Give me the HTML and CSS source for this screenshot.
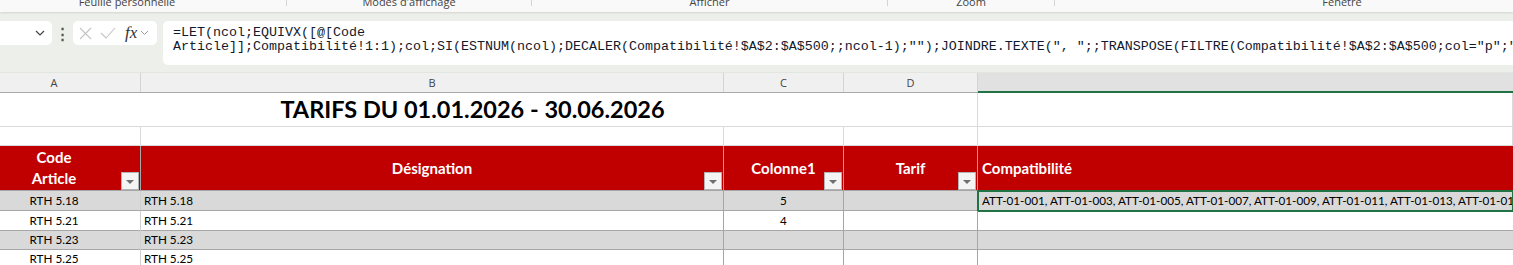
FILE: index.html
```html
<!DOCTYPE html>
<html lang="fr">
<head>
  <meta charset="utf-8">
  <title>Tarifs</title>
  <link rel="stylesheet" href="styles.css">
</head>
<body>
  <div class="ribbon">
    <div class="rgroup g1"><span>Feuille personnelle</span></div>
    <div class="rgroup g2"><span>Modes d'affichage</span></div>
    <div class="rgroup g3"><span>Afficher</span></div>
    <div class="rgroup g4"><span>Zoom</span></div>
    <div class="rgroup g5"><span>Fenêtre</span></div>
  </div>

  <div class="fbar">
    <div class="namebox">
      <svg width="10" height="6" viewBox="0 0 10 6"><path d="M1 1l4 4 4-4" fill="none" stroke="#444" stroke-width="1.2"/></svg>
    </div>
    <div class="dots">&#8942;</div>
    <div class="fxbox">
      <svg class="ico-x" width="13" height="13" viewBox="0 0 13 13"><path d="M1 1l11 11M12 1L1 12" stroke="#c4c4c4" stroke-width="1.1"/></svg>
      <svg class="ico-ok" width="16" height="12" viewBox="0 0 16 12"><path d="M1 6l5 5L15 1" fill="none" stroke="#c4c4c4" stroke-width="1.1"/></svg>
      <span class="fx">fx</span>
      <svg class="ico-down" width="9" height="6" viewBox="0 0 9 6"><path d="M1 1l3.5 3.5L8 1" fill="none" stroke="#999" stroke-width="1"/></svg>
    </div>
    <div class="formula">=LET(ncol;EQUIVX([@[Code
Article]];Compatibilité!1:1);col;SI(ESTNUM(ncol);DECALER(Compatibilité!$A$2:$A$500;;ncol-1);"");JOINDRE.TEXTE(", ";;TRANSPOSE(FILTRE(Compatibilité!$A$2:$A$500;col="p";"")))))</div>
  </div>

  <div class="sheet">
    <div class="row colhead">
      <div>A</div><div>B</div><div>C</div><div>D</div><div class="cur"></div>
    </div>

    <div class="row r-title">
      <div class="title">TARIFS DU 01.01.2026 - 30.06.2026</div>
      <div class="grid"></div>
    </div>

    <div class="row r-blank">
      <div class="grid"></div><div class="grid"></div><div class="grid"></div><div class="grid"></div><div class="grid"></div>
    </div>

    <div class="row r-head">
      <div class="th center">Code<br>Article<span class="filter"></span></div>
      <div class="th center">Désignation<span class="filter"></span></div>
      <div class="th center">Colonne1<span class="filter"></span></div>
      <div class="th center">Tarif<span class="filter"></span></div>
      <div class="th left">Compatibilité</div>
    </div>

    <div class="row data band">
      <div class="td center">RTH 5.18</div>
      <div class="td">RTH 5.18</div>
      <div class="td center">5</div>
      <div class="td"></div>
      <div class="td compat sel">ATT-01-001, ATT-01-003, ATT-01-005, ATT-01-007, ATT-01-009, ATT-01-011, ATT-01-013, ATT-01-015, ATT-01-017</div>
    </div>
    <div class="row data short">
      <div class="td center">RTH 5.21</div>
      <div class="td">RTH 5.21</div>
      <div class="td center">4</div>
      <div class="td"></div>
      <div class="td compat"></div>
    </div>
    <div class="row data band short">
      <div class="td center">RTH 5.23</div>
      <div class="td">RTH 5.23</div>
      <div class="td center"></div>
      <div class="td"></div>
      <div class="td compat"></div>
    </div>
    <div class="row data short">
      <div class="td center">RTH 5.25</div>
      <div class="td">RTH 5.25</div>
      <div class="td center"></div>
      <div class="td"></div>
      <div class="td compat"></div>
    </div>
  </div>
</body>
</html>
```

FILE: styles.css
```css
* {
  box-sizing: border-box;
}
body {
  margin: 0;
  width: 1513px;
  height: 265px;
  overflow: hidden;
  background: #fff;
  font-family: Lato, "Liberation Sans", sans-serif;
  color: #000;
}

/* ribbon group labels, cut at the top */
.ribbon {
  height: 12px;
  display: flex;
  background: #f9f9f9;
  overflow: hidden;
  box-shadow: 0 1px 2px #d2d4d0;
  position: relative;
  font-family: "Open Sans", "Noto Sans", sans-serif;
  font-size: 11px;
  color: #444;
}
.rgroup {
  flex: none;
  height: 6px;
  text-align: center;
  border-right: 1px solid #d4d4d4;
}
.rgroup span {
  display: block;
  margin-top: -5px;
  line-height: 14px;
  white-space: nowrap;
}
.g1 { width: 287px; padding-right: 32px; }
.g2 { width: 245px; }
.g3 { width: 356px; }
.g4 { width: 167px; }
.g5 { width: 574px; border-right: none; }

/* formula bar */
.fbar {
  height: 60px;
  background: #edf0ea;
  display: flex;
  align-items: flex-start;
  padding-top: 9px;
}
.namebox {
  width: 52px;
  height: 24px;
  background: #fff;
  border-radius: 0 5px 5px 0;
  display: flex;
  align-items: center;
  justify-content: flex-end;
  padding-right: 7px;
}
.dots {
  width: 21px;
  height: 24px;
  line-height: 24px;
  text-align: center;
  font-size: 15px;
  font-weight: bold;
  color: #555;
}
.fxbox {
  width: 84px;
  height: 24px;
  background: #fff;
  border-radius: 5px;
  display: flex;
  align-items: center;
  padding-left: 6px;
}
.ico-ok { margin-left: 8px; }
.fx {
  margin-left: 9px;
  font-family: "Liberation Serif", serif;
  font-style: italic;
  font-size: 17px;
  color: #333;
  line-height: 20px;
}
.ico-down { margin-left: 3px; }
.formula {
  flex: 1;
  margin-left: 6px;
  height: 44px;
  background: #fff;
  border-radius: 5px 0 0 5px;
  padding: 5px 10px;
  font-family: "Liberation Mono", monospace;
  font-size: 13.33px;
  line-height: 14px;
  white-space: pre;
  overflow: hidden;
  color: #111a2e;
}

/* sheet grid */
.sheet {
  margin-left: -32px;
  width: 1545px;
}
.row {
  display: grid;
  grid-template-columns: 173px 583px 120px 134px 535px;
}
.colhead {
  height: 21px;
  background: #f0f0f0;
  border-top: 1px solid #e2e6df;
  border-bottom: 1px solid #a9a9a9;
  font-family: "Open Sans", "Noto Sans", sans-serif;
  font-size: 11px;
  color: #444;
}
.colhead div {
  text-align: center;
  line-height: 19px;
  border-right: 1px solid #d4d4d4;
}
.colhead .cur {
  background: #e1e1e1;
  border-right: none;
  border-bottom: 2px solid #217346;
  margin-bottom: -1px;
}

.r-title {
  height: 34px;
}
.title {
  grid-column: span 4;
  border-right: 1px solid #dadada;
  border-bottom: 1px solid #dadada;
  text-align: center;
  font-weight: bold;
  font-size: 23.5px;
  line-height: 33px;
}
.grid {
  border-right: 1px solid #dadada;
  border-bottom: 1px solid #dadada;
}
.r-blank {
  height: 19px;
}

.r-head {
  height: 45px;
  background: #c00000;
  border-bottom: 1px solid #a6a6a6;
}
.th {
  position: relative;
  color: #fff;
  font-weight: bold;
  font-size: 15px;
  line-height: 21px;
  border-right: 1px solid #a6a6a6;
  display: flex;
  flex-direction: column;
  justify-content: center;
}
.th.center { text-align: center; }
.th.left { padding-left: 4px; border-right: none; }
.filter {
  position: absolute;
  right: 1px;
  bottom: 0;
  width: 18px;
  height: 18px;
  background: #f4f4f4;
  border: 1px solid #b3b3b3;
}
.filter::after {
  content: "";
  position: absolute;
  left: 4px;
  top: 7px;
  border-left: 4px solid transparent;
  border-right: 4px solid transparent;
  border-top: 4px solid #6f6f6f;
}

.data {
  height: 20px;
  font-size: 11.7px;
  line-height: 19px;
}
.data.short {
  height: 19px;
}
.band {
  background: #d9d9d9;
}
.td {
  border-bottom: 1px solid #a6a6a6;
  border-right: 1px solid #a6a6a6;
  white-space: nowrap;
  padding-left: 3px;
}
.td:first-child {
  border-right-color: #d0d0d0;
}
.td.center {
  text-align: center;
  padding-left: 0;
}
.td.compat {
  border-right: none;
  padding-left: 4px;
  overflow: hidden;
}
.sel {
  outline: 2px solid #217346;
  outline-offset: -1px;
}
```
